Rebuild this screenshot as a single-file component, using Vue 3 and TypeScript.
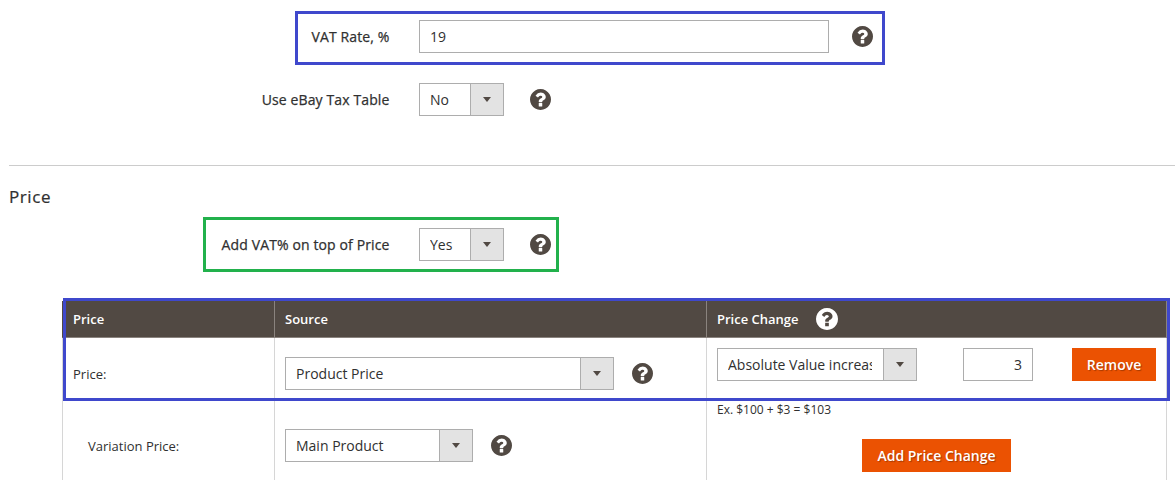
<script setup lang="ts">
const helpPath: string =
  "M1024 1376v-192q0-14-9-23t-23-9h-192q-14 0-23 9t-9 23v192q0 14 9 23t23 9h192q14 0 23-9t9-23zm256-672q0-88-55.5-163t-138.5-116-170-41q-243 0-371 213-15 24 8 42l132 100q7 6 19 6 16 0 25-12 53-68 86-92 34-24 86-24 48 0 85.5 26t37.5 59q0 38-20 61t-68 45q-63 28-115.5 86.5t-52.5 125.5v36q0 14 9 23t23 9h192q14 0 23-9t9-23q0-19 21.5-49.5t54.5-49.5q32-18 49-28.5t46-35 44.5-48 28-60.5 12.5-81zm384 192q0 209-103 385.5t-279.5 279.5-385.5 103-385.5-103-279.5-279.5-103-385.5 103-385.5 279.5-279.5 385.5-103 385.5 103 279.5 279.5 103 385.5z";
</script>

<template>
  <div class="page">
    <div class="field first">
      <label class="label">VAT Rate, %</label>
      <input class="text vat" value="19" />
      <svg class="help help-input" viewBox="128 128 1536 1536"><path :d="helpPath" /></svg>
      <span class="mark mark-vat"></span>
    </div>

    <div class="field second">
      <label class="label">Use eBay Tax Table</label>
      <div class="select small">
        <select><option>No</option></select>
        <span class="addon"><i class="arrow"></i></span>
      </div>
      <svg class="help help-select" viewBox="128 128 1536 1536"><path :d="helpPath" /></svg>
    </div>

    <hr class="rule" />
    <h2 class="title">Price</h2>

    <div class="field third">
      <label class="label">Add VAT% on top of Price</label>
      <div class="select small">
        <select><option>Yes</option></select>
        <span class="addon"><i class="arrow"></i></span>
      </div>
      <svg class="help help-select" viewBox="128 128 1536 1536"><path :d="helpPath" /></svg>
      <span class="mark mark-green"></span>
    </div>

    <div class="table-wrap">
      <table class="grid">
        <colgroup>
          <col class="c1" />
          <col class="c2" />
          <col class="c3" />
        </colgroup>
        <thead>
          <tr>
            <th>Price</th>
            <th>Source</th>
            <th>
              <span class="th-inner">
                Price Change
                <svg class="help help-head" viewBox="128 128 1536 1536"><path :d="helpPath" /></svg>
              </span>
            </th>
          </tr>
        </thead>
        <tbody>
          <tr class="row-a">
            <td class="name">Price:</td>
            <td>
              <div class="source">
                <div class="select wide">
                  <select><option>Product Price</option></select>
                  <span class="addon"><i class="arrow"></i></span>
                </div>
                <svg class="help help-cell" viewBox="128 128 1536 1536"><path :d="helpPath" /></svg>
              </div>
            </td>
            <td rowspan="2" class="change">
              <div class="change-row">
                <div class="select mode">
                  <select><option>Absolute Value increase</option></select>
                  <span class="addon"><i class="arrow"></i></span>
                </div>
                <input class="text amount" value="3" />
                <button class="btn remove" type="button">Remove</button>
              </div>
              <p class="note">Ex. $100 + $3 = $103</p>
              <div class="add-row">
                <button class="btn add" type="button">Add Price Change</button>
              </div>
            </td>
          </tr>
          <tr class="row-b">
            <td class="name sub">Variation Price:</td>
            <td>
              <div class="source">
                <div class="select main">
                  <select><option>Main Product</option></select>
                  <span class="addon"><i class="arrow"></i></span>
                </div>
                <svg class="help help-cell" viewBox="128 128 1536 1536"><path :d="helpPath" /></svg>
              </div>
            </td>
          </tr>
        </tbody>
      </table>
      <span class="mark mark-table"></span>
    </div>
  </div>
</template>

<style>
html,
body {
  margin: 0;
  background: #fff;
}
</style>

<style scoped>
.page {
  width: 1175px;
  height: 480px;
  overflow: hidden;
  box-sizing: border-box;
  padding: 20px 0 0 9px;
  font-family: "Open Sans", "Liberation Sans", sans-serif;
  font-size: 14px;
  color: #303030;
  background: #fff;
}
.field {
  position: relative;
  display: flex;
  align-items: center;
  height: 33px;
}
.second {
  margin-top: 30px;
}
.third {
  margin-top: 21px;
}
.label {
  width: 380.5px;
  margin-right: 29.5px;
  text-align: right;
  font-weight: 400;
  letter-spacing: 0.12px;
  -webkit-text-stroke: 0.25px #303030;
  color: #303030;
}
.text {
  box-sizing: border-box;
  height: 33px;
  border: 1px solid #adadad;
  border-radius: 0;
  font: inherit;
  color: #303030;
  background: #fff;
  outline: none;
}
.vat {
  width: 410px;
  padding: 0 10px;
}
.amount {
  width: 70px;
  padding: 0 10px;
  text-align: right;
  margin-left: 46px;
}
.help {
  display: block;
  width: 21px;
  height: 21px;
  flex: none;
  fill: #514943;
}
.help-input {
  margin-left: 23px;
}
.help-select {
  margin-left: 26px;
}
.help-cell {
  margin-left: 17.5px;
}
.help-head {
  width: 22px;
  height: 22px;
  margin-left: 17px;
  fill: #fff;
}
.select {
  box-sizing: border-box;
  display: flex;
  height: 33px;
  flex: none;
  border: 1px solid #adadad;
  background: #fff;
}
.select select {
  flex: 1;
  min-width: 0;
  appearance: none;
  -webkit-appearance: none;
  border: none;
  border-radius: 0;
  outline: none;
  background: #fff;
  padding: 0 11px 0 10px;
  font: inherit;
  color: #303030;
}
.small {
  width: 85px;
}
.wide {
  width: 329px;
}
.main {
  width: 188px;
}
.mode {
  width: 200px;
}
.addon {
  box-sizing: border-box;
  width: 33px;
  flex: none;
  display: flex;
  align-items: center;
  justify-content: center;
  background: #e3e3e3;
  border-left: 1px solid #adadad;
}
.arrow {
  width: 0;
  height: 0;
  border-left: 4px solid transparent;
  border-right: 4px solid transparent;
  border-top: 5px solid #514943;
}
.rule {
  margin: 49px 0 0;
  border: none;
  border-top: 1px solid #cccccc;
}
.title {
  margin: 21px 0 0;
  height: 20px;
  line-height: 20px;
  font-size: 17px;
  font-weight: 400;
  letter-spacing: 0.6px;
  color: #303030;
  -webkit-text-stroke: 0.2px #303030;
}
.table-wrap {
  position: relative;
  margin: 40px 0 0 53px;
  width: 1108px;
}
.grid {
  width: 1105px;
  table-layout: fixed;
  border-collapse: separate;
  border-spacing: 0;
  font-size: 13px;
}
.c1 {
  width: 213px;
}
.c2 {
  width: 432px;
}
.c3 {
  width: 460px;
}
th {
  box-sizing: border-box;
  height: 37px;
  padding: 0 10px;
  background: #514943;
  color: #fff;
  text-align: left;
  font-weight: 600;
  border-right: 1px solid #8a837e;
  border-bottom: 1px solid #8a837e;
}
th:first-child {
  border-left: 1px solid #514943;
}
.th-inner {
  display: flex;
  align-items: center;
}
td {
  box-sizing: border-box;
  padding: 0 10px;
  border-right: 1px solid #d6d6d6;
  vertical-align: middle;
}
td:first-child {
  border-left: 1px solid #d6d6d6;
}
.row-a td {
  height: 71px;
}
.row-b td {
  height: 73px;
}
.name {
  color: #303030;
}
.sub {
  padding-left: 25px;
}
.source {
  display: flex;
  align-items: center;
  font-size: 14px;
}
td.change {
  vertical-align: top;
  padding-top: 10px;
  font-size: 14px;
}
.change-row {
  display: flex;
  align-items: center;
}
.btn {
  box-sizing: border-box;
  height: 33px;
  padding: 0;
  border: none;
  border-radius: 0;
  background: #eb5202;
  color: #fff;
  font: inherit;
  font-weight: 600;
  text-shadow: 1px 1px 1px rgba(0, 0, 0, 0.3);
}
.remove {
  width: 84px;
  margin-left: 39px;
}
.add {
  width: 149px;
}
.add-row {
  display: flex;
  justify-content: center;
  margin-top: 21px;
}
.note {
  margin: 20px 0 0;
  height: 17px;
  line-height: 17px;
  font-size: 12px;
  color: #303030;
}
.mark {
  position: absolute;
  box-sizing: border-box;
  pointer-events: none;
}
.mark-vat {
  left: 286px;
  top: -9px;
  width: 590px;
  height: 54px;
  border: 3px solid #3f48cc;
}
.mark-green {
  left: 194px;
  top: -11px;
  width: 356px;
  height: 55px;
  border: 3px solid #22b14c;
}
.mark-table {
  left: 1px;
  top: -3px;
  width: 1107px;
  height: 103px;
  border: 3px solid #3f48cc;
}
</style>
